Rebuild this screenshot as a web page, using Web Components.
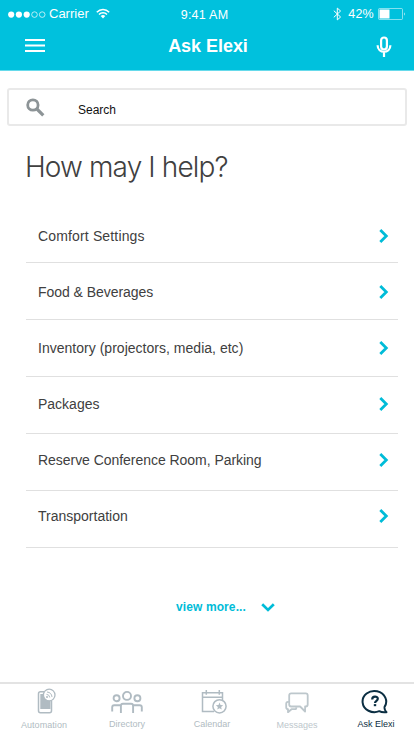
<!DOCTYPE html>
<html lang="en">
<head>
<meta charset="utf-8">
<title>Ask Elexi</title>
<style>
html,body{margin:0;height:100%;background:#fff;font-family:"Liberation Sans",Arial,sans-serif}
body{overflow:hidden}
</style>
</head>
<body>
<elexi-app></elexi-app>
<script>
const define = (name, html) => customElements.define(name, class extends HTMLElement {
  constructor(){
    super();
    const t = document.createElement('template');
    t.innerHTML = html;
    this.attachShadow({mode:'open'}).append(t.content.cloneNode(true));
  }
});

define('status-bar', `<style>
:host{display:grid;grid-template-columns:1fr auto 1fr;height:28px;color:#fff;font-size:12px;line-height:16px;align-items:start}
.l,.r{display:flex;align-items:center;height:28px}
.r{justify-content:flex-end;padding-right:8px}
.l{padding-left:8px}
svg{display:block;flex:none}
.carrier{font-size:13px;margin-left:3px;letter-spacing:0}
.time{padding:7px 5px 0 0;font-size:12.5px;letter-spacing:.25px}
.bat{letter-spacing:.25px;font-size:12.5px;margin:0 4px 0 6px}
</style>
<div class="l"><svg width="38" height="8" viewBox="0 0 38 8"><g fill="#fff"><circle cx="3.2" cy="4.6" r="3.1"/><circle cx="10.9" cy="4.6" r="3.1"/><circle cx="18.7" cy="4.6" r="3.1"/></g><g fill="none" stroke="#fff" stroke-width=".7"><circle cx="26.5" cy="4.6" r="2.8"/><circle cx="34.2" cy="4.6" r="2.8"/></g></svg>
<span class="carrier">Carrier</span>
<svg style="margin:-2px 0 0 7px" width="14" height="11" viewBox="0 0 14 11"><g fill="none" stroke="#fff" stroke-width="1.5"><path d="M.8 4.2C4.300.5 9.700.5 13.200 4.200"/><path d="M3 6.500C5.200 4.200 8.800 4.200 11 6.500"/></g><path d="M4.700 8.100Q7 6.100 9.300 8.100L7 10.500z" fill="#fff"/></svg></div>
<span class="time">9:41 AM</span>
<div class="r"><svg width="9" height="14" viewBox="0 0 9 14"><path d="M.8 3.700 7.600 10 4.300 12.900V1.100L7.600 4 .8 10.300" fill="none" stroke="#fff" stroke-width="1"/></svg>
<span class="bat">42%</span>
<svg width="28" height="12" viewBox="0 0 28 12"><rect x=".5" y=".5" width="24" height="11" rx="1" fill="none" stroke="#fff" stroke-opacity=".65" stroke-width=".8"/><rect x="1.500" y="1.500" width="10" height="9" fill="#fff"/><path d="M26 4.200q1.500 1.800 0 3.600z" fill="#fff"/></svg></div>`);

define('title-bar', `<style>
:host{display:grid;grid-template-columns:1fr auto 1fr;height:42px;color:#fff;align-items:start}
.t{font-weight:700;font-size:18px;line-height:20px;padding-top:8px;letter-spacing:-.04px;margin-right:-2px}
svg{display:block}
.menu{margin:11px 0 0 25px}
.mic{margin:8px 22px 0 auto}
</style>
<svg class="menu" width="20" height="14" viewBox="0 0 20 14"><path d="M0 1h20M0 6.500h20M0 12h20" stroke="#fff" stroke-width="2"/></svg>
<span class="t">Ask Elexi</span>
<svg class="mic" width="16" height="22" viewBox="0 0 16 22"><g fill="none" stroke="#fff" stroke-width="2.200"><rect x="5.100" y="1.500" width="5.800" height="12" rx="2.900"/><path d="M1.600 9.200c0 8.700 12.800 8.700 12.800 0M8 16v5"/></g></svg>`);

define('search-box', `<style>
:host{display:flex;box-sizing:border-box;height:38px;border:2px solid #e9e9e9;border-radius:3px;margin:17px 7px 0;align-items:center}
svg{margin:0 33px 0 17px;flex:none}
span{font-size:12px;line-height:16px;color:#111;padding-top:5px}
</style>
<svg width="19" height="19" viewBox="0 0 19 19"><circle cx="6.900" cy="7" r="5.200" fill="none" stroke="#8d9497" stroke-width="2.800"/><path d="M10.900 11 17.300 17.400" stroke="#8d9497" stroke-width="3.200"/></svg>
<span><slot></slot></span>`);

define('help-row', `<style>
:host{display:flex;box-sizing:border-box;height:57px;border-bottom:1px solid #e0e0e0;padding:calc(22px - var(--i)*1px) 9px 0 12px;justify-content:space-between;align-items:flex-start;font-size:14px;line-height:16px;color:#404040;letter-spacing:var(--ls,0)}
svg{display:block;margin-top:1px}
</style>
<span><slot></slot></span>
<svg width="10" height="14" viewBox="0 0 10 14"><path d="M1.300 1 7.300 7 1.300 13" fill="none" stroke="#00bcd8" stroke-width="2.800"/></svg>`);

define('view-more', `<style>
:host{display:flex;align-items:center;justify-content:center;gap:15px;color:#00bcd8;font-size:12px;line-height:16px;font-weight:700;margin:51px 0 0 37px;letter-spacing:.1px}
svg{display:block}
</style>
<span><slot></slot></span>
<svg width="14" height="9" viewBox="0 0 14 9"><path d="M1.200 1.200 7 6.900 12.800 1.200" fill="none" stroke="#00bcd8" stroke-width="2.700"/></svg>`);

define('tab-item', `<style>
:host{display:flex;flex-direction:column;align-items:center;width:84px;color:#b0bbc2;font-size:9px;line-height:12px}
.i{height:30px;display:flex;align-items:center}
</style>
<div class="i"><slot name="icon"></slot></div><span><slot></slot></span>`);

define('tab-bar', `<style>
:host{display:flex;box-sizing:border-box;height:54px;border-top:2px solid #e3e3e3;margin-top:auto;padding-top:4px;background:#fff}
svg{display:block;margin-top:-3px}
tab-item{flex:none}
tab-item[on]{color:#0b2e42}
.low{padding-top:1px}
</style>
<tab-item class="low" style="margin-left:2px;letter-spacing:.06px"><svg slot="icon" style="margin:-7px 0 0 3px" width="22" height="28" viewBox="0 0 22 28" fill="none" stroke="#b0bbc2"><path d="M9 4.700H5.500q-2 0-2 2v17q0 2 2 2h9q2 0 2-2V14" stroke-width="1.500"/><path d="M5.300 7h5l5.200 7v8H5.300z" fill="#b0bbc2" stroke="none"/><circle cx="14.200" cy="8" r="5.800" fill="#fff" stroke-width="1.300"/><path d="M12 5q4.500.4 5 5M11.500 7.300q3 .3 3.300 3.200" stroke-width="1"/><circle cx="12" cy="10" r="1" fill="#b0bbc2" stroke="none"/></svg>Automation</tab-item>
<tab-item style="margin-left:-1px"><svg slot="icon" width="32" height="24" viewBox="0 0 32 24" fill="none" stroke="#b0bbc2" stroke-width="1.900"><circle cx="16" cy="5.900" r="4"/><circle cx="5.600" cy="8.200" r="3"/><circle cx="26.400" cy="8.200" r="3"/><path d="M9.900 23v-7.200q0-2 2-2h8.200q2 0 2 2V23M1.200 21.500v-4.200q0-2 2-2H10M22 15.300h6.800q2 0 2 2v4.200"/></svg>Directory</tab-item>
<tab-item style="margin-left:1px"><svg slot="icon" style="margin-left:3px" width="28" height="26" viewBox="0 0 28 26" fill="none" stroke="#b0bbc2" stroke-width="1.500"><path d="M14 22.500H2.500V3.800h20V12M2.500 8.200h20M6.300 1v4.800M19.300 1v4.800"/><circle cx="19.500" cy="17.300" r="6.600" fill="#fff"/><path d="m19.500 13.600 1 2.500 2.700.2-2.100 1.700.7 2.600-2.300-1.400-2.300 1.400.7-2.600-2.100-1.700 2.700-.2z" fill="#b0bbc2" stroke="none"/></svg>Calendar</tab-item>
<tab-item class="low" style="color:#bdc7cc;margin-left:1px"><svg slot="icon" width="24" height="22" viewBox="0 0 24 22" fill="none" stroke="#bdc7cc" stroke-width="1.800" stroke-linejoin="round"><path d="M6.200 1.300h14.500q2 0 2 2v9.200q0 2-2 2h-.6v5l-5-5H6.200q-2 0-2-2V3.300q0-2 2-2z"/><path d="M3.900 9.800H3q-1.800 0-1.800 2v3.500q0 1.900 1.800 1.900v3l3.500-3h4.300l.8-1.800"/></svg>Messages</tab-item>
<tab-item on style="margin-left:-5px"><svg slot="icon" style="margin-left:-2px" width="28" height="26" viewBox="0 0 28 26" fill="none" stroke="#0b2e42" stroke-width="2"><path d="M23.300 18.300A11.800 10.600 0 1 0 18.300 22.200Q21 23.800 25.500 23.200 23.500 21.200 23.300 18.300" stroke-linejoin="round"/><path d="M11.200 10.400c0-3.700 5.600-3.600 5.600-.6 0 2-2.800 2-2.800 4.300" stroke-width="2.200"/><path d="M12.800 15.100h2.400v2.100h-2.400z" fill="#0b2e42" stroke="none"/></svg>Ask Elexi</tab-item>`);

define('elexi-app', `<style>
:host{display:flex;flex-direction:column;width:414px;height:736px;background:#fff}
header{background:#00c1dd;height:70px;border-bottom:1px solid #66daeb;flex:none}
h1{margin:24px 0 0 25px;font:300 28px/34px Inter,"Liberation Sans",sans-serif;color:#404040;letter-spacing:-.87px}
main{margin:22px 16px 0 26px}
</style>
<header><status-bar></status-bar><title-bar></title-bar></header>
<search-box>Search</search-box>
<h1>How may I help?</h1>
<main>
<help-row style="--i:0;--ls:.15px">Comfort Settings</help-row>
<help-row style="--i:1;--ls:-.04px">Food &amp; Beverages</help-row>
<help-row style="--i:2;--ls:.02px">Inventory (projectors, media, etc)</help-row>
<help-row style="--i:3">Packages</help-row>
<help-row style="--i:4;--ls:-.04px">Reserve Conference Room, Parking</help-row>
<help-row style="--i:5">Transportation</help-row>
</main>
<view-more>view more...</view-more>
<tab-bar></tab-bar>`);
</script>
</body>
</html>
